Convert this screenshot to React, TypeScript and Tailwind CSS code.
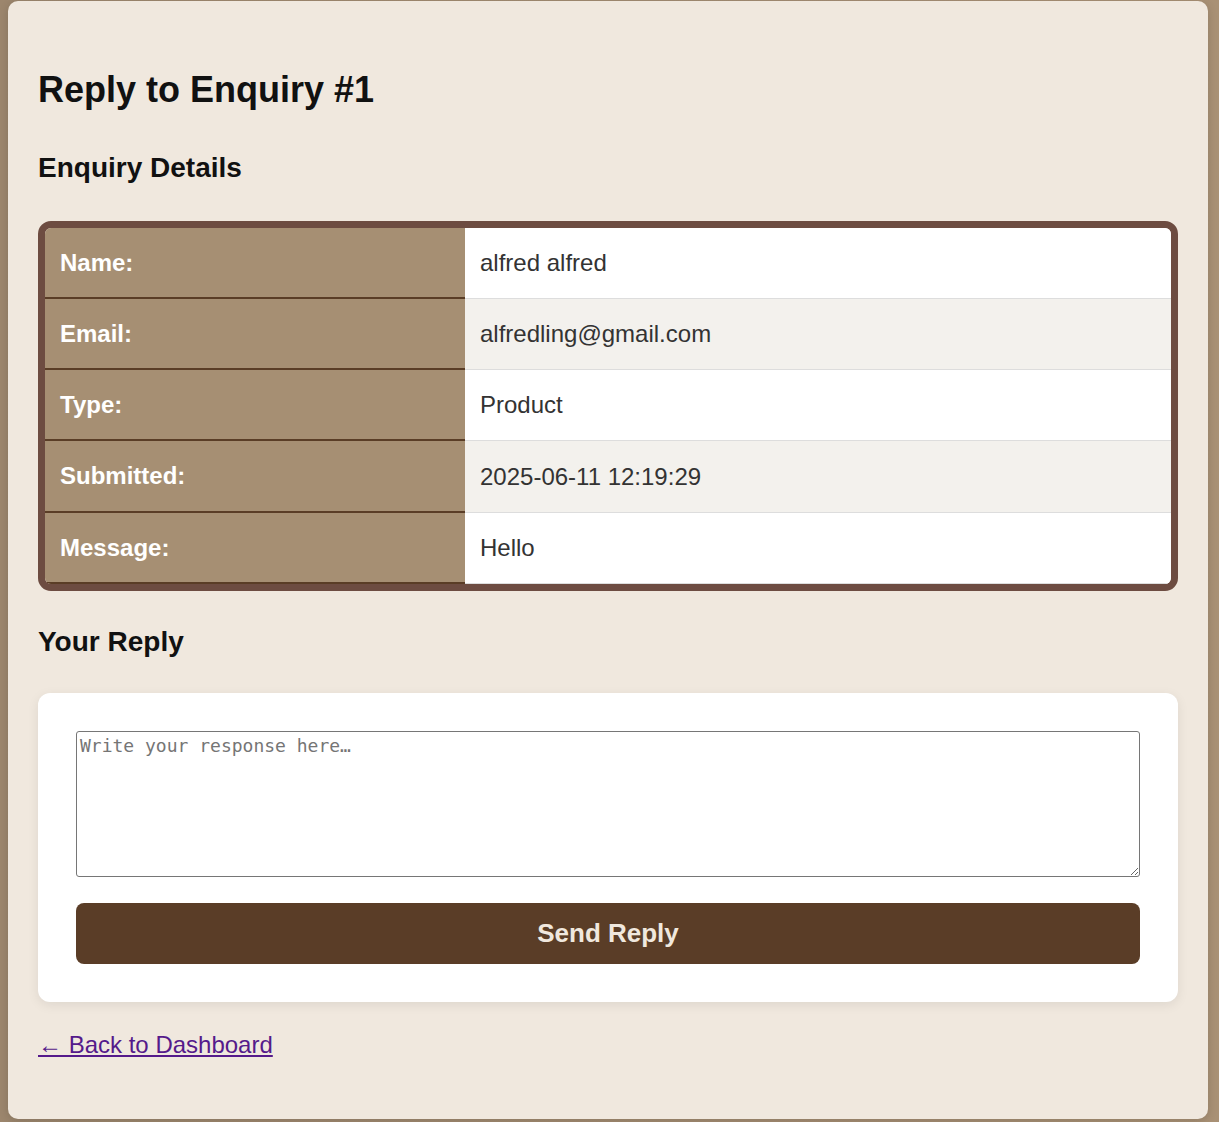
import React from 'react';

const rows = [
  { label: 'Name:', value: 'alfred alfred', h: 'h-[71px]' },
  { label: 'Email:', value: 'alfredling@gmail.com', h: 'h-[71px]' },
  { label: 'Type:', value: 'Product', h: 'h-[71px]' },
  { label: 'Submitted:', value: '2025-06-11 12:19:29', h: 'h-[72px]' },
  { label: 'Message:', value: 'Hello', h: 'h-[71px]' },
];

export default function App() {
  return (
    <div className="min-h-screen bg-gradient-to-r from-[#9c866d] to-[#a99175] pl-[8px] pt-[1px] font-['Liberation_Sans',Arial,sans-serif]">
      <div className="w-[1200px] rounded-[10px] bg-[#f0e8de] px-[30px] pt-[68px] pb-[59px] shadow-[0_2px_10px_rgba(0,0,0,0.15)]">
        <h1 className="text-[36px] leading-[41px] font-bold text-[#111]">Reply to Enquiry #1</h1>

        <h3 className="mt-[42px] text-[28px] leading-[32px] font-bold text-[#111]">Enquiry Details</h3>

        <div className="mt-[37px] overflow-hidden rounded-[13px] border-[7px] border-[#6d4c41]">
          <div className="grid grid-cols-[420px_1fr]">
            {rows.map((r, i) => (
              <React.Fragment key={r.label}>
                <div
                  className={`${r.h} flex items-center border-b-2 border-[#5a3d26] bg-[#a68f73] pl-[15px] text-[24px] font-bold text-white`}
                >
                  {r.label}
                </div>
                <div
                  className={`${r.h} flex items-center border-b border-[#dddddd] pl-[15px] text-[24px] text-[#333] ${
                    i % 2 === 1 ? 'bg-[#f3f1ed]' : 'bg-white'
                  }`}
                >
                  {r.value}
                </div>
              </React.Fragment>
            ))}
          </div>
        </div>

        <h3 className="mt-[35px] text-[28px] leading-[32px] font-bold text-[#111]">Your Reply</h3>

        <div className="mt-[35px] rounded-[12px] bg-white p-[38px] shadow-[0_3px_12px_rgba(0,0,0,0.08)]">
          <textarea
            placeholder="Write your response here…"
            className="block h-[146px] w-full resize-y rounded-[3px] border border-[#767676] px-[3px] py-[2px] font-['DejaVu_Sans_Mono',monospace] text-[18px] leading-[24px] text-[#222] placeholder:text-[#757575]"
          />
          <button
            type="button"
            className="mt-[26px] flex h-[61px] w-full items-center justify-center rounded-[8px] bg-[#5a3d27] text-[26px] font-bold text-[#f0e8de]"
          >
            Send Reply
          </button>
        </div>

        <a href="#" className="mt-[29px] inline-block text-[24px] leading-[28px] text-[#551a8b] underline">
          ← Back to Dashboard
        </a>
      </div>
    </div>
  );
}
